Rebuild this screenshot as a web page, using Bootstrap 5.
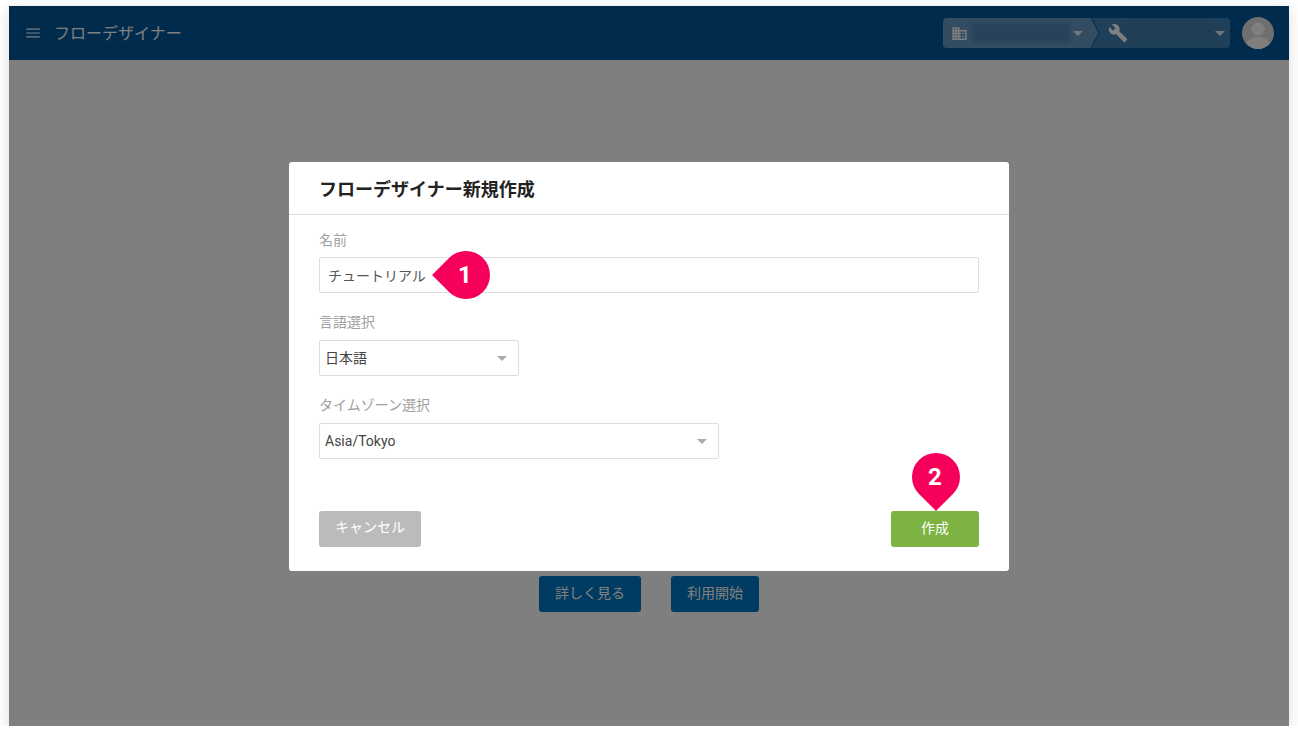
<!DOCTYPE html>
<html lang="ja">
<head>
  <meta charset="UTF-8">
  <title>フローデザイナー</title>
  <link href="https://cdn.jsdelivr.net/npm/bootstrap@5.3.0/dist/css/bootstrap.min.css" rel="stylesheet">
  <style>
    body { background: #fff; font-family: Roboto, "Noto Sans CJK JP", sans-serif; font-size: 14px; overflow: hidden; }
    .app-frame { width: 1280px; height: 720px; margin: 6px auto 0; background: #fff; box-shadow: 0 3px 14px rgba(0,0,0,.14); }
    .app-bar { height: 54px; background: #00569a; padding: 0 15px; color: #fff; }
    .app-title { font-size: 16px; margin-left: 12px; padding-top: 2px; }
    .context-group { width: 287px; height: 30px; border-radius: 4px; overflow: hidden; margin-right: 12px; position: relative; }
    .context-org { width: 148px; background: rgba(255,255,255,.4); padding-left: 8px; }
    .context-env { flex: 1; background: rgba(255,255,255,.25); padding-left: 17px; }
    .context-arrow { position: absolute; left: 147px; top: 0; }
    .blur-name { height: 20px; background: rgba(60,115,170,.55); filter: blur(2px); }
    .context-org .blur-name { width: 98px; margin-left: 4px; }
    .context-env .blur-name { width: 80px; margin-left: 3px; background: rgba(60,125,180,.4); }
    .mini-caret { width: 0; height: 0; border-left: 5.5px solid transparent; border-right: 5.5px solid transparent; border-top: 5px solid #fff; opacity: .85; }
    .context-org .mini-caret { margin-left: 3px; }
    .context-env .mini-caret { margin-left: 4px; }
    .app-main { padding-top: 516px; gap: 30px; }
    .btn-blue { height: 36px; padding: 0 16px 1px; background: #0076c4; color: #fff; border: 0; border-radius: 3px; font-size: 14px; }
    .dim-layer { position: absolute; left: 9px; top: 6px; width: 1280px; height: 720px; background: rgba(0,0,0,.5); }
    .dialog-box { width: 720px; height: 409px; margin-top: 156px; border: 0; border-radius: 3px; position: relative; background: #fff; }
    .dialog-head { height: 53px; padding: 3px 30px 0; border-bottom: 1px solid #ddd; }
    .dialog-title { font-size: 18px; font-weight: 700; color: #222; }
    .dialog-body { padding: 15px 30px 24px; flex: 1; }
    .field-label { color: #a0a0a0; font-size: 14px; line-height: 21px; margin-bottom: 6px; display: block; }
    .field-input { height: 36px; border: 1px solid #ddd; border-radius: 2px; padding: 0 8px; font-size: 14px; color: #555; margin-bottom: 19px; box-shadow: none; }
    .field-select { height: 36px; border: 1px solid #ddd; border-radius: 2px; padding: 0 5px; font-size: 14px; color: #444; margin-top: 1px; margin-bottom: 19px;
      background-image: url("data:image/svg+xml,%3Csvg xmlns='http://www.w3.org/2000/svg' width='12' height='6'%3E%3Cpath d='M0 0h12L6 6z' fill='%23aaa'/%3E%3C/svg%3E");
      background-size: 10px 5px; background-position: right 11px center; }
    .w-lang { width: 200px; }
    .w-zone { width: 400px; }
    .dialog-actions { margin-top: auto; }
    .btn-cancel { width: 102px; height: 36px; padding: 0 0 3px; background: #bbb; color: #fff; border: 0; border-radius: 3px; font-size: 14px; }
    .btn-create { width: 88px; height: 36px; padding: 0 0 2px; background: #7cb342; color: #fff; border: 0; border-radius: 3px; font-size: 14px; }
    .step-pin { position: absolute; width: 48px; height: 48px; color: #fff; font-size: 24px; font-weight: 700; font-family: Roboto, sans-serif; line-height: 1; }
    .step-pin::before { content: ""; position: absolute; inset: 0; background: #f5005a; border-radius: 50% 50% 0 50%; }
    .step-pin span { position: relative; margin-right: 2px; }
    .pin-left::before { transform: rotate(135deg); }
    .pin-down::before { transform: rotate(45deg); }
    .pin-name { left: 153px; top: 89px; }
    .pin-create { left: 623px; top: 291px; }
  </style>
</head>
<body>

<div class="app-frame d-flex flex-column">
  <header class="app-bar d-flex align-items-center">
    <svg width="18" height="18" viewBox="0 0 24 24" fill="#fff"><path d="M3 18h18v-1.600H3V18zm0-5.200h18v-1.600H3v1.600zM3 6v1.600h18V6H3z"/></svg>
    <span class="app-title">フローデザイナー</span>
    <div class="context-group d-flex ms-auto">
      <div class="context-org d-flex align-items-center">
        <svg width="17" height="17" viewBox="0 0 24 24" fill="#fff"><path d="M12 7V3H2v18h20V7H12zM6 19H4v-2h2v2zm0-4H4v-2h2v2zm0-4H4V9h2v2zm0-4H4V5h2v2zm4 12H8v-2h2v2zm0-4H8v-2h2v2zm0-4H8V9h2v2zm0-4H8V5h2v2zm10 12h-8v-2h2v-2h-2v-2h2v-2h-2V9h8v10zm-2-8h-2v2h2v-2zm0 4h-2v2h2v-2z"/></svg>
        <div class="blur-name"></div>
        <div class="mini-caret"></div>
      </div>
      <div class="context-env d-flex align-items-center">
        <svg width="20" height="20" viewBox="0 0 24 24" fill="#fff"><path d="M22.700 19l-9.100-9.100c.9-2.300.4-5-1.500-6.900-2-2-5-2.400-7.400-1.300L9 6 6 9 1.600 4.700C.4 7.100.9 10.100 2.900 12.100c1.900 1.900 4.600 2.400 6.900 1.500l9.100 9.100c.4.4 1 .4 1.400 0l2.300-2.300c.5-.4.5-1.100.1-1.400z"/></svg>
        <div class="blur-name"></div>
        <div class="mini-caret"></div>
      </div>
      <svg class="context-arrow" width="10" height="30" viewBox="0 0 10 30"><path d="M0 0h1l8 15-8 15H0z" fill="#669ac2"/><path d="M1 0l8 15-8 15" fill="none" stroke="#00569a" stroke-width="1"/></svg>
    </div>
    <svg width="32" height="32" viewBox="0 0 32 32">
      <defs><clipPath id="avatar-clip"><circle cx="16" cy="16" r="16"/></clipPath></defs>
      <g clip-path="url(#avatar-clip)">
        <rect width="32" height="32" fill="#dedede"/>
        <circle cx="16" cy="12" r="6.500" fill="#fff"/>
        <ellipse cx="16" cy="28" rx="11.500" ry="8" fill="#fff"/>
      </g>
    </svg>
  </header>
  <main class="app-main d-flex justify-content-center">
    <button class="btn btn-blue" type="button">詳しく見る</button>
    <button class="btn btn-blue" type="button">利用開始</button>
  </main>
</div>

<div class="dim-layer d-flex justify-content-center align-items-start">
  <div class="dialog-box d-flex flex-column">
    <div class="dialog-head d-flex align-items-center">
      <h5 class="dialog-title m-0">フローデザイナー新規作成</h5>
    </div>
    <form class="dialog-body d-flex flex-column">
      <label class="field-label">名前</label>
      <input type="text" class="form-control field-input" value="チュートリアル">
      <label class="field-label">言語選択</label>
      <select class="form-select field-select w-lang"><option>日本語</option></select>
      <label class="field-label">タイムゾーン選択</label>
      <select class="form-select field-select w-zone"><option>Asia/Tokyo</option></select>
      <div class="dialog-actions d-flex justify-content-between">
        <button type="button" class="btn btn-cancel">キャンセル</button>
        <button type="button" class="btn btn-create">作成</button>
      </div>
    </form>
    <div class="step-pin pin-left pin-name d-flex align-items-center justify-content-center"><span>1</span></div>
    <div class="step-pin pin-down pin-create d-flex align-items-center justify-content-center"><span>2</span></div>
  </div>
</div>

<script src="https://cdn.jsdelivr.net/npm/bootstrap@5.3.0/dist/js/bootstrap.bundle.min.js"></script>
</body>
</html>
